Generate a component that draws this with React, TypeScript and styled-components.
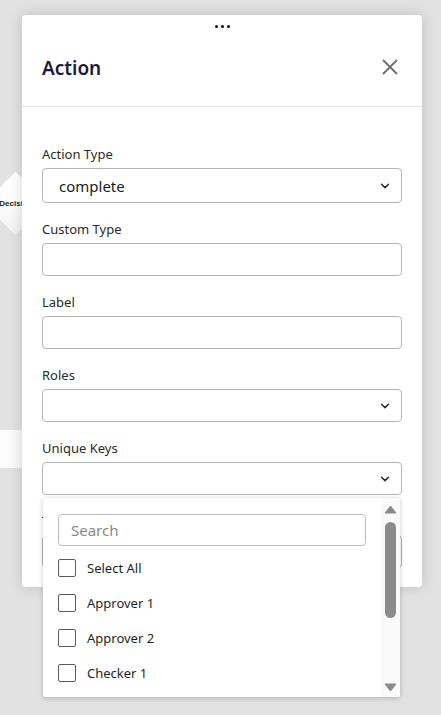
import styled, { createGlobalStyle } from "styled-components";

const GlobalStyle = createGlobalStyle`
  html, body {
    margin: 0;
    padding: 0;
    background: #e2e2e2;
    font-family: "Segoe UI", "Noto Sans", "Open Sans", sans-serif;
  }
  * { box-sizing: border-box; }
`;

const roles = ["Select All", "Approver 1", "Approver 2", "Checker 1"];

export default function App() {
  return (
    <>
      <GlobalStyle />
      <Canvas>
        {/* flow nodes behind the panel */}
        <DiamondNode>
          <DiamondShape />
          <NodeText>Decision</NodeText>
        </DiamondNode>
        <RectNode />

        <Modal>
          <DragHandle>
            <Dot />
            <Dot />
            <Dot />
          </DragHandle>
          <Header>
            <Title>Action</Title>
            <CloseButton aria-label="close">
              <svg width="16" height="16" viewBox="0 0 16 16">
                <path d="M1.5 1.5 L14.5 14.5 M14.5 1.5 L1.5 14.5" stroke="#6e6e6e" strokeWidth="1.8" strokeLinecap="round" />
              </svg>
            </CloseButton>
          </Header>

          <Body>
            <Field>
              <Label>Action Type</Label>
              <SelectBox $tall>
                <SelectValue>complete</SelectValue>
                <Chevron />
              </SelectBox>
            </Field>
            <Field>
              <Label>Custom Type</Label>
              <Input />
            </Field>
            <Field>
              <Label>Label</Label>
              <Input />
            </Field>
            <Field>
              <Label>Roles</Label>
              <SelectBox>
                <SelectValue />
                <Chevron />
              </SelectBox>
            </Field>
            <Field>
              <Label>Unique Keys</Label>
              <SelectBox>
                <SelectValue />
                <Chevron />
              </SelectBox>
              <Dropdown>
                <DropContent>
                  <Search placeholder="Search" />
                  <OptionList>
                    {roles.map((r) => (
                      <Option key={r}>
                        <Check />
                        <span>{r}</span>
                      </Option>
                    ))}
                  </OptionList>
                </DropContent>
                <ScrollTrack>
                  <svg width="13" height="9" viewBox="0 0 13 9">
                    <path d="M6.5 1 L12 8 L1 8 Z" fill="#8a8a8a" stroke="#8a8a8a" strokeLinejoin="round" />
                  </svg>
                  <Thumb />
                  <Spacer />
                  <svg width="13" height="9" viewBox="0 0 13 9">
                    <path d="M1 1 L12 1 L6.5 8 Z" fill="#8a8a8a" stroke="#8a8a8a" strokeLinejoin="round" />
                  </svg>
                </ScrollTrack>
              </Dropdown>
            </Field>
            <Field>
              <Label>Timeout</Label>
              <Input />
            </Field>
          </Body>
        </Modal>
      </Canvas>
    </>
  );
}

function Chevron() {
  return (
    <svg width="10" height="6" viewBox="0 0 10 6">
      <path d="M1.5 1.2 L5 4.6 L8.5 1.2" fill="none" stroke="#2a2a2a" strokeWidth="1.5" strokeLinecap="round" strokeLinejoin="round" />
    </svg>
  );
}

const Canvas = styled.div`
  position: relative;
  width: 441px;
  height: 715px;
  overflow: hidden;
  background: #e2e2e2;
`;

const DiamondNode = styled.div`
  position: absolute;
  left: -17px;
  top: 171px;
  width: 64px;
  height: 64px;
  display: flex;
  align-items: center;
  justify-content: center;
`;

const DiamondShape = styled.div`
  position: absolute;
  width: 45px;
  height: 45px;
  transform: rotate(45deg);
  background: linear-gradient(135deg, #ffffff 40%, #f1f1f1 100%);
`;

const NodeText = styled.span`
  position: relative;
  font-family: "Liberation Sans", Arial, sans-serif;
  font-size: 8px;
  font-weight: 700;
  color: #1d1d1d;
  margin-left: 2px;
`;

const RectNode = styled.div`
  position: absolute;
  left: 0;
  top: 430px;
  width: 40px;
  height: 38px;
  background: linear-gradient(90deg, #fdfdfd, #f5f5f5);
`;

const Modal = styled.div`
  position: absolute;
  left: 22px;
  top: 15px;
  width: 400px;
  background: #fff;
  border-radius: 4px;
  box-shadow: 0 0 14px rgba(0, 0, 0, 0.16);
  display: flex;
  flex-direction: column;
`;

const DragHandle = styled.div`
  height: 22px;
  display: flex;
  align-items: center;
  justify-content: center;
  gap: 3px;
`;

const Dot = styled.span`
  width: 3px;
  height: 3px;
  border-radius: 50%;
  background: #111;
`;

const Header = styled.div`
  height: 70px;
  padding: 0 20px 8px 20px;
  display: flex;
  align-items: center;
  justify-content: space-between;
  border-bottom: 1px solid #e3e3e3;
`;

const Title = styled.h2`
  margin: 0;
  font-size: 19px;
  font-weight: 600;
  color: #1b1a3a;
  line-height: 24px;
`;

const CloseButton = styled.button`
  width: 24px;
  height: 24px;
  padding: 0;
  border: none;
  background: none;
  display: flex;
  align-items: center;
  justify-content: center;
  margin-top: -2px;
`;

const Body = styled.div`
  padding: 38px 20px 19px 20px;
  display: flex;
  flex-direction: column;
  gap: 17px;
`;

const Field = styled.div`
  position: relative;
  display: flex;
  flex-direction: column;
`;

const Label = styled.label`
  font-size: 13px;
  line-height: 18px;
  color: #2a2a2a;
  margin-bottom: 5px;
`;

const controlBase = `
  width: 100%;
  height: 33px;
  border: 1px solid #b5b5b5;
  border-radius: 4px;
  background: #fff;
`;

const Input = styled.input`
  ${controlBase}
  padding: 0 10px;
  font: inherit;
  outline: none;
`;

const SelectBox = styled.div<{ $tall?: boolean }>`
  ${controlBase}
  height: ${(p) => (p.$tall ? "35px" : "33px")};
  display: flex;
  align-items: center;
  justify-content: space-between;
  padding: 0 11px 0 16px;
`;

const SelectValue = styled.span`
  font-size: 15px;
  color: #1a1a1a;
`;

const Dropdown = styled.div`
  position: absolute;
  top: 59px;
  left: 1px;
  width: 357px;
  height: 199px;
  background: #fff;
  border-radius: 2px;
  box-shadow: 0 1px 5px rgba(0, 0, 0, 0.22);
  display: flex;
  overflow: hidden;
  z-index: 5;
`;

const DropContent = styled.div`
  flex: 1;
  padding: 16px 15px 0 15px;
  display: flex;
  flex-direction: column;
`;

const Search = styled.input`
  flex-shrink: 0;
  height: 32px;
  width: 100%;
  border: 1px solid #bdbdbd;
  border-radius: 4px;
  padding: 0 12px;
  font-family: inherit;
  font-size: 15px;
  outline: none;
  &::placeholder {
    color: #8a8a8a;
  }
`;

const OptionList = styled.div`
  margin-top: 4px;
  display: flex;
  flex-direction: column;
`;

const Option = styled.div`
  height: 35px;
  flex-shrink: 0;
  display: flex;
  align-items: center;
  gap: 11px;
  font-size: 13px;
  color: #1f1f1f;
`;

const Check = styled.span`
  width: 18px;
  height: 18px;
  border: 1px solid #5c5c5c;
  border-radius: 2px;
  background: #fff;
`;

const ScrollTrack = styled.div`
  width: 19px;
  background: #fafafa;
  display: flex;
  flex-direction: column;
  align-items: center;
  padding: 7px 0 5px 0;
`;

const Thumb = styled.div`
  width: 11px;
  height: 96px;
  margin-top: 8px;
  border-radius: 6px;
  background: #8b8b8b;
`;

const Spacer = styled.div`
  flex: 1;
`;
